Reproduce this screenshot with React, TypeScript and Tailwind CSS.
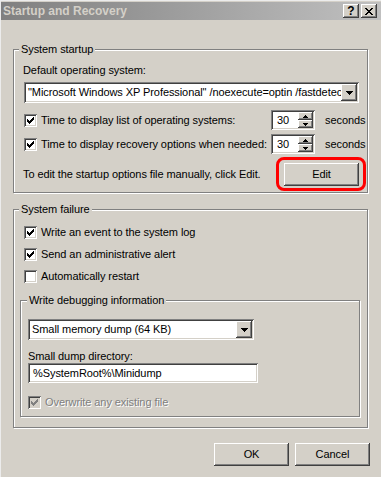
const raised =
  "shadow-[inset_-1px_-1px_0_#404040,inset_1px_1px_0_#ffffff,inset_-2px_-2px_0_#808080,inset_2px_2px_0_#d4d0c8]";
const sunken =
  "shadow-[inset_1px_1px_0_#808080,inset_-1px_-1px_0_#ffffff,inset_2px_2px_0_#404040,inset_-2px_-2px_0_#d4d0c8]";
const etched = "border border-[#808080] shadow-[inset_1px_1px_0_#ffffff,1px_1px_0_#ffffff]";

function CheckMark({ color }: { color: string }) {
  return (
    <svg width="7" height="7" viewBox="0 0 7 7" shapeRendering="crispEdges">
      <path
        fill={color}
        d="M6 0h1v1h-1z M5 1h2v1h-2z M0 2h1v1h-1z M4 2h3v1h-3z M0 3h2v1h-2z M3 3h3v1h-3z M0 4h5v1h-5z M1 5h3v1h-3z M2 6h1v1h-1z"
      />
    </svg>
  );
}

function Checkbox({ label, checked, disabled }: { label: string; checked?: boolean; disabled?: boolean }) {
  return (
    <div className="flex items-center gap-[4px]">
      <span
        className={`flex w-[13px] h-[13px] shrink-0 items-center justify-center ${sunken} ${
          disabled ? "bg-[#d4d0c8]" : "bg-white"
        }`}
      >
        {checked && <CheckMark color={disabled ? "#808080" : "#000000"} />}
      </span>
      <span className={disabled ? "text-[#808080] [text-shadow:1px_1px_0_#ffffff]" : ""}>{label}</span>
    </div>
  );
}

function DownArrow() {
  return (
    <svg width="7" height="4" viewBox="0 0 7 4" shapeRendering="crispEdges">
      <path d="M0 0h7v1h-7z M1 1h5v1h-5z M2 2h3v1h-3z M3 3h1v1h-1z" fill="#000" />
    </svg>
  );
}

function Combo({ value, className }: { value: string; className: string }) {
  return (
    <div className={`flex h-[21px] bg-white p-[2px] ${sunken} ${className}`}>
      <span className="flex-1 overflow-hidden whitespace-nowrap pl-[2px] leading-[17px]">{value}</span>
      <span className={`flex w-[16px] items-center justify-center bg-[#d4d0c8] ${raised}`}>
        <DownArrow />
      </span>
    </div>
  );
}

function Spin({ value }: { value: string }) {
  return (
    <div className={`flex w-[44px] h-[20px] bg-white p-[2px] ${sunken}`}>
      <span className="flex-1 pl-[4px] leading-[16px]">{value}</span>
      <div className="flex w-[15px] flex-col">
        <span className={`flex flex-1 items-center justify-center bg-[#d4d0c8] ${raised}`}>
          <svg width="5" height="3" viewBox="0 0 5 3" shapeRendering="crispEdges">
            <path d="M2 0h1v1h-1z M1 1h3v1h-3z M0 2h5v1h-5z" fill="#000" />
          </svg>
        </span>
        <span className={`flex flex-1 items-center justify-center bg-[#d4d0c8] ${raised}`}>
          <svg width="5" height="3" viewBox="0 0 5 3" shapeRendering="crispEdges">
            <path d="M0 0h5v1h-5z M1 1h3v1h-3z M2 2h1v1h-1z" fill="#000" />
          </svg>
        </span>
      </div>
    </div>
  );
}

function Button({ label, className = "" }: { label: string; className?: string }) {
  return (
    <div
      className={`flex w-[75px] h-[23px] items-center justify-center bg-[#d4d0c8] ${raised} ${className}`}
    >
      {label}
    </div>
  );
}

function Legend({ text, className }: { text: string; className: string }) {
  return (
    <span className={`absolute -top-[7px] bg-[#d4d0c8] px-[2px] leading-[13px] ${className}`}>{text}</span>
  );
}

export default function App() {
  return (
    <div className="w-[381px] h-[477px] overflow-hidden bg-[#d4d0c8] pt-[2px] pl-[1px] text-[11px] leading-[13px] tracking-[-0.08px] text-black font-['Liberation_Sans',Arial,sans-serif] shadow-[inset_1px_1px_0_#ececec]">
      {/* title bar */}
      <div className="flex h-[18px] items-center bg-gradient-to-r from-[#808080] to-[#c0c0c0] pl-[2px] pr-[4px] tracking-normal">
        <span className="flex-1 text-[12px] font-bold text-[#d4d0c8]">Startup and Recovery</span>
        <div className="flex gap-[2px]">
          <span className={`flex w-[16px] h-[14px] items-center justify-center bg-[#d4d0c8] text-[12px] font-bold leading-none ${raised}`}>
            ?
          </span>
          <span className={`flex w-[16px] h-[14px] items-center justify-center bg-[#d4d0c8] ${raised}`}>
            <svg width="8" height="7" viewBox="0 0 8 7" shapeRendering="crispEdges">
              <path
                fill="#000"
                d="M0 0h2v1h-2z M6 0h2v1h-2z M1 1h2v1h-2z M5 1h2v1h-2z M2 2h4v1h-4z M3 3h2v1h-2z M2 4h4v1h-4z M1 5h2v1h-2z M5 5h2v1h-2z M0 6h2v1h-2z M6 6h2v1h-2z"
              />
            </svg>
          </span>
        </div>
      </div>

      <div className="pl-[12px]">
        {/* System startup */}
        <div className={`relative mt-[29px] w-[355px] h-[144px] ${etched}`}>
          <Legend text="System startup" className="left-[5px]" />
          <div className="pt-[14px] pl-[9px]">Default operating system:</div>
          <Combo
            className="ml-[10px] mt-[5px] w-[335px]"
            value={'"Microsoft Windows XP Professional" /noexecute=optin /fastdetect'}
          />
          <div className="mt-[7px] flex h-[20px] items-center pl-[10px]">
            <div className="w-[247px]">
              <Checkbox label="Time to display list of operating systems:" checked />
            </div>
            <Spin value="30" />
            <span className="ml-[10px]">seconds</span>
          </div>
          <div className="mt-[4px] flex h-[20px] items-center pl-[10px]">
            <div className="w-[247px]">
              <Checkbox label="Time to display recovery options when needed:" checked />
            </div>
            <Spin value="30" />
            <span className="ml-[10px]">seconds</span>
          </div>
          <div className="mt-[9px] flex items-center pl-[9px]">
            <span className="w-[261px]">To edit the startup options file manually, click Edit.</span>
            <div className="relative">
              <Button label="Edit" />
              <div className="pointer-events-none absolute -left-[8px] -top-[6px] w-[90px] h-[34px] rounded-[8px] border-[3px] border-[#ff0000]" />
            </div>
          </div>
        </div>

        {/* System failure */}
        <div className={`relative mt-[16px] w-[355px] h-[219px] ${etched}`}>
          <Legend text="System failure" className="left-[5px]" />
          <div className="flex flex-col gap-[9px] pt-[16px] pl-[10px]">
            <Checkbox label="Write an event to the system log" checked />
            <Checkbox label="Send an administrative alert" checked />
            <Checkbox label="Automatically restart" />
          </div>

          <div className={`relative ml-[6px] mt-[17px] w-[340px] h-[117px] ${etched}`}>
            <Legend text="Write debugging information" className="left-[6px]" />
            <Combo className="ml-[7px] mt-[18px] w-[226px]" value="Small memory dump (64 KB)" />
            <div className="ml-[7px] mt-[10px]">Small dump directory:</div>
            <div className={`ml-[7px] flex w-[230px] h-[20px] items-center bg-white pl-[5px] ${sunken}`}>
              %SystemRoot%\Minidump
            </div>
            <div className="ml-[7px] mt-[13px]">
              <Checkbox label="Overwrite any existing file" checked disabled />
            </div>
          </div>
        </div>
      </div>

      <div className="mt-[15px] flex justify-end gap-[6px] pr-[11px]">
        <Button label="OK" />
        <Button label="Cancel" />
      </div>
    </div>
  );
}
